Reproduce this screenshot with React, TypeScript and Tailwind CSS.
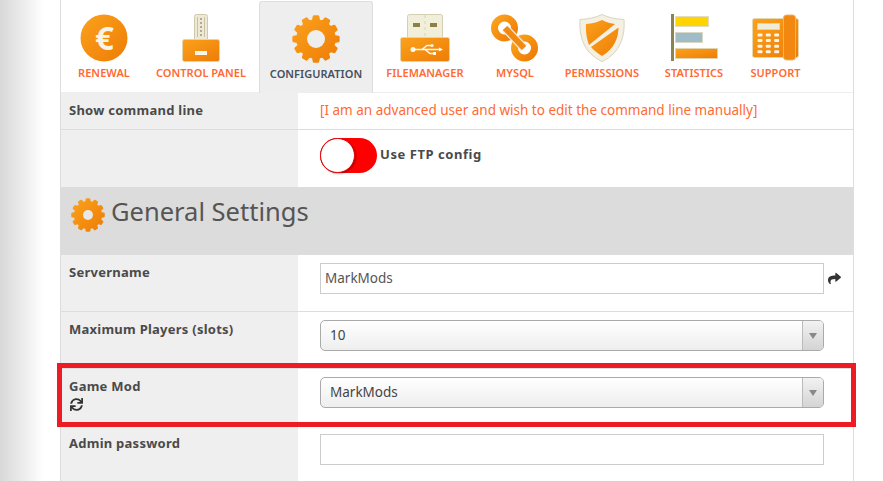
import { ReactNode } from "react";
import { FaShare, FaSync } from "react-icons/fa";

const gearPath = (cx: number, cy: number, outer: number, inner: number, teeth: number) => {
  let d = "";
  const step = (Math.PI * 2) / teeth;
  for (let i = 0; i < teeth; i++) {
    const a = i * step - Math.PI / 2;
    const pts: [number, number][] = [
      [a - step * 0.5, inner],
      [a - step * 0.3, inner],
      [a - step * 0.17, outer],
      [a + step * 0.17, outer],
      [a + step * 0.3, inner],
    ];
    pts.forEach(([t, r], j) => {
      d += `${i === 0 && j === 0 ? "M" : "L"}${(cx + Math.cos(t) * r).toFixed(2)} ${(cy + Math.sin(t) * r).toFixed(2)} `;
    });
  }
  return d + "Z";
};

function Gear({ size, hole = 9, fillHole = "#eeeeee" }: { size: number; hole?: number; fillHole?: string }) {
  return (
    <svg width={size} height={size} viewBox="0 0 48 48">
      <path d={gearPath(24, 24, 22.5, 18.5, 12)} fill="url(#org)" stroke="url(#org)" strokeWidth="2.5" strokeLinejoin="round" />
      <circle cx="24" cy="24" r={hole} fill={fillHole} />
    </svg>
  );
}

const Euro = () => (
  <svg width="48" height="48" viewBox="0 0 48 48">
    <circle cx="24" cy="24" r="23.5" fill="url(#org)" />
    <text x="24.500" y="36" textAnchor="middle" fontSize="33" fontWeight="700" fontFamily="'Noto Sans', sans-serif" fill="#f7f3e6">
      €
    </text>
  </svg>
);

const KeyIcon = () => (
  <svg width="38" height="48" viewBox="0 0 38 48">
    <rect x="12.500" y="0.500" width="13" height="27" rx="2" fill="#eee9d6" stroke="#cfc8ac" />
    <path d="M15.500 3v20M22.500 3v20" stroke="#c9c3a3" strokeWidth="1" />
    <path d="M19 4v19" stroke="#b3ac8a" strokeWidth="2" strokeDasharray="2 2" />
    <rect x="0.500" y="25.500" width="37" height="22" rx="2" fill="url(#org)" stroke="#e3d4ae" />
    <rect x="13" y="37" width="12" height="4" fill="#f9f6ea" />
  </svg>
);

const UsbIcon = () => (
  <svg width="50" height="48" viewBox="0 0 50 48">
    <rect x="7.500" y="0.500" width="35" height="26" rx="2" fill="#f1eeda" stroke="#d5cfb4" />
    <rect x="13" y="9" width="7" height="4" fill="#8e7f45" />
    <rect x="30" y="9" width="7" height="4" fill="#8e7f45" />
    <path d="M25 1v24" stroke="#d9d4bb" strokeDasharray="3 3" />
    <rect x="0.500" y="23.500" width="49" height="24" rx="2" fill="url(#org)" stroke="#e3d4ae" />
    <path d="M13 35.500h27M22 35.500l5-4h4M25 35.500l5 4h4" stroke="#fdf9ec" strokeWidth="1.500" fill="none" />
    <circle cx="13" cy="35.500" r="2.500" fill="#fdf9ec" />
    <circle cx="32" cy="31.500" r="1.500" fill="#fdf9ec" />
    <rect x="33" y="38" width="3" height="3" fill="#fdf9ec" />
    <path d="M39 33.500l4 2-4 2z" fill="#fdf9ec" />
  </svg>
);

const LinkIcon = () => (
  <svg width="48" height="48" viewBox="0 0 48 48">
    <circle cx="13.500" cy="14" r="10" fill="#ffffff" stroke="url(#org)" strokeWidth="7" />
    <circle cx="33.500" cy="34" r="10" fill="#ffffff" stroke="url(#org)" strokeWidth="7" />
    <path d="M14 14l19 20" stroke="#efeadb" strokeWidth="8.500" />
    <path d="M14 14l19 20" stroke="#f28a12" strokeWidth="6" />
  </svg>
);

const ShieldIcon = () => (
  <svg width="46" height="48" viewBox="0 0 46 48">
    <path d="M23 .5c6 3 13 4.500 22 5 1 16-3 33-22 42C4 38.500 0 21.500 1 5.500c9-.5 16-2 22-5z" fill="#f4f1e2" stroke="#d8d3bb" />
    <path d="M23 6c4 2.500 9.500 3.500 13 4L10 31C8 25 6.500 19 7 10c6-.5 11.500-1.500 16-4z" fill="url(#org)" />
    <path d="M39.500 13.500C39.500 24 35 35 23 42c-5-3-8.500-6-11-9z" fill="url(#org)" />
  </svg>
);

const StatsIcon = () => (
  <svg width="48" height="48" viewBox="0 0 48 48">
    <rect x="1" y="0" width="3" height="47" fill="#8c8352" />
    <rect x="5.500" y="2.500" width="33" height="10" fill="#ffd400" stroke="#e3dcc0" />
    <rect x="5.500" y="18.500" width="27" height="10" fill="#9fbcc8" stroke="#d9d8c4" />
    <rect x="5.500" y="34.500" width="42" height="10" fill="url(#org)" stroke="#e3d4ae" />
  </svg>
);

const PhoneIcon = () => {
  const keys = [];
  for (let r = 0; r < 4; r++)
    for (let c = 0; c < 3; c++) keys.push(<rect key={`${r}-${c}`} x={5.500 + c * 8.300} y={19.500 + r * 5.600} width="5" height="3" rx="1" fill="#f8f4e6" />);
  return (
    <svg width="48" height="48" viewBox="0 0 48 48">
      <rect x="0.500" y="4.500" width="46" height="39" rx="2" fill="url(#org)" stroke="#e8d8ae" />
      <rect x="31.500" y="1" width="12" height="45" rx="3" fill="#f2880f" stroke="#eeb566" />
      <rect x="5.500" y="9.500" width="22" height="6" fill="#efecd9" stroke="#d8d3bb" />
      {keys}
    </svg>
  );
};

const tabs: { label: string; width: string; icon: ReactNode; active?: boolean }[] = [
  { label: "RENEWAL", width: "w-[78px]", icon: <Euro /> },
  { label: "CONTROL PANEL", width: "w-[116px]", icon: <KeyIcon /> },
  { label: "CONFIGURATION", width: "w-[114px]", icon: <Gear size={48} />, active: true },
  { label: "FILEMANAGER", width: "w-[104px]", icon: <UsbIcon /> },
  { label: "MYSQL", width: "w-[76px]", icon: <LinkIcon /> },
  { label: "PERMISSIONS", width: "w-[98px]", icon: <ShieldIcon /> },
  { label: "STATISTICS", width: "w-[86px]", icon: <StatsIcon /> },
  { label: "SUPPORT", width: "w-[77px]", icon: <PhoneIcon /> },
];

function Row({ label, extra, className, children }: { label?: string; extra?: ReactNode; className: string; children: ReactNode }) {
  return (
    <div className={`flex border-b border-[#dddddd] ${className}`}>
      <div className="w-[237px] shrink-0 bg-[#efefef] pl-2 pt-2 text-[13px] leading-[18px] font-bold tracking-[0.25px] text-[#4a4a4a]">
        {label}
        {extra}
      </div>
      <div className="flex-1 bg-white pl-[22px] pt-2">{children}</div>
    </div>
  );
}

function SelectBox({ value }: { value: string }) {
  return (
    <div className="flex h-[31px] w-[504px] overflow-hidden rounded-[5px] border border-[#aaaaaa] bg-gradient-to-b from-white to-[#eeeeee]">
      <div className="flex-1 pl-[9px] text-[13.5px] leading-[28px] text-[#444444]">{value}</div>
      <div className="flex w-[21px] items-center justify-center border-l border-[#bbbbbb] bg-gradient-to-b from-[#f2f2f2] to-[#d4d4d4]">
        <svg width="8" height="6" viewBox="0 0 8 6">
          <path d="M0 0h8L4 6z" fill="#888888" />
        </svg>
      </div>
    </div>
  );
}

function InputBox({ value }: { value?: string }) {
  return <div className="h-[31px] w-[504px] border border-[#cccccc] bg-white pl-1 text-[13.5px] leading-[28px] text-[#555555]">{value}</div>;
}

export default function App() {
  return (
    <div className="relative h-[481px] w-[883px] overflow-hidden bg-gradient-to-r from-[#d8d8d8] via-white via-[5%] to-white font-['Noto_Sans',sans-serif]">
      <svg width="0" height="0" className="absolute">
        <defs>
          <linearGradient id="org" x1="0" y1="0" x2="1" y2="1">
            <stop offset="0" stopColor="#fba21c" />
            <stop offset="1" stopColor="#ee7c06" />
          </linearGradient>
        </defs>
      </svg>
      <div className="ml-[60px] w-[794px] border-x border-[#dddddd] bg-white">
        <div className="flex h-[93px] border-b border-[#eeeeee] pl-1 pt-px">
          {tabs.map((t) => (
            <div
              key={t.label}
              className={`flex h-[92px] flex-col items-center rounded-t-[3px] pt-[13px] ${t.width} ${
                t.active ? "border-x border-t border-[#dddddd] bg-[#eeeeee]" : ""
              }`}
            >
              <div className="h-[48px]">{t.icon}</div>
              <div className={`mt-[3px] text-[11px] leading-[16px] font-semibold tracking-[0.05px] ${t.active ? "text-[#45505f]" : "text-[#ff6a33]"}`}>{t.label}</div>
            </div>
          ))}
        </div>
        <Row label="Show command line" className="h-[37px]">
          <div className="text-[13.5px] leading-[18px] text-[#ff6a33]">[I am an advanced user and wish to edit the command line manually]</div>
        </Row>
        <div className="flex h-[57px]">
          <div className="w-[237px] shrink-0 bg-[#efefef]" />
          <div className="flex flex-1 items-start bg-white pt-2 pl-[22px]">
            <div className="flex h-[35px] w-[57px] rounded-full bg-[#ff0000]">
              <div className="h-[35px] w-[35px] rounded-full border border-[#dd0000] bg-white shadow-[1px_1px_2px_rgba(0,0,0,0.3)]" />
            </div>
            <span className="ml-[3px] pt-[7px] text-[13px] leading-[18px] font-bold tracking-[0.55px] text-[#4a4a4a]">Use FTP config</span>
          </div>
        </div>
        <div className="flex h-[68px] items-start gap-[6px] border-b border-[#dddddd] bg-[#dcdcdc] pl-[10px] pt-[6px]">
          <div className="pt-[5px]">
            <Gear size={34} fillHole="#e8e8e8" hole={7} />
          </div>
          <h2 className="text-[25.5px] leading-[36px] text-[#555555]">General Settings</h2>
        </div>
        <Row label="Servername" className="h-[57px]">
          <div className="flex items-center">
            <InputBox value="MarkMods" />
            <FaShare className="ml-[4px] text-[13px] text-[#333333]" />
          </div>
        </Row>
        <Row label="Maximum Players (slots)" className="h-[57px]">
          <SelectBox value="10" />
        </Row>
        <Row label="Game Mod" className="h-[57px]" extra={<FaSync className="mt-[3px] ml-px text-[13px] text-[#333333]" />}>
          <SelectBox value="MarkMods" />
        </Row>
        <Row label="Admin password" className="h-[60px] border-b-0">
          <InputBox />
        </Row>
      </div>
      <div className="absolute top-[363px] left-[57px] h-[64px] w-[799px] border-[5px] border-[#ed1c24]" />
    </div>
  );
}
